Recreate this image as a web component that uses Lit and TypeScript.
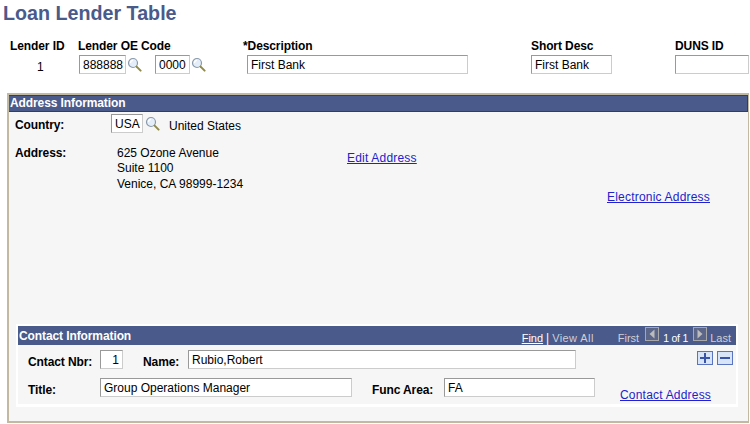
import { LitElement, html, css, svg } from "lit";
import { customElement } from "lit/decorators.js";

const lens = html`<svg class="lens" width="15" height="15" viewBox="0 0 15 15">
  <circle cx="6" cy="6" r="4.5" fill="#e4eefa" stroke="#8a9aac" stroke-width="1.2"/>
  <path d="M3.5 6a2.6 2.6 0 0 1 2.5-2.6" fill="none" stroke="#fff" stroke-width="1.2"/>
  <path d="M9.6 9.6l4 4" stroke="#8f8a4a" stroke-width="2" stroke-linecap="round"/>
</svg>`;

const arrow = (d: string, cls: string) => html`<svg class="nav ${cls}" width="14" height="14" viewBox="0 0 14 14">
  <rect x=".5" y=".5" width="13" height="13" fill="#5c6688" stroke="#a8a8a8"/>
  ${svg`<path d=${d} fill="#bcbcbc"/>`}
</svg>`;

@customElement("app-root")
export class AppRoot extends LitElement {
  static styles = css`
    :host {
      display: block;
      width: 750px;
      height: 424px;
      background: #fff;
      font: 12px "Liberation Sans", Arial, sans-serif;
      color: #000;
      overflow: hidden;
      box-sizing: border-box;
    }
    * { box-sizing: border-box; }
    h1 {
      margin: 0;
      padding: 2px 0 0 3px;
      height: 39px;
      font-size: 19.7px;
      line-height: 22px;
      font-weight: bold;
      color: #4a5a8a;
    }
    label, .lbl { font-weight: bold; white-space: nowrap; letter-spacing: -0.1px; }
    input {
      display: block;
      height: 19px;
      margin: 0;
      padding: 0 0 0 3px;
      font: 12px "Liberation Sans", Arial, sans-serif;
      color: #000;
      background: #fff;
      border: 1px solid;
      border-color: #999 #ccc #ccc #999;
      border-radius: 0;
      outline: none;
    }
    .top {
      display: grid;
      grid-template-columns: 68px 165px 288px 144px 74px;
      padding-left: 10px;
      height: 54px;
    }
    .col { display: flex; flex-direction: column; gap: 2px; }
    .col .lbl { line-height: 14px; height: 14px; }
    .id { padding-left: 27px; padding-top: 5px; line-height: 14px; }
    .codes { display: flex; align-items: center; padding-left: 1px; }
    .codes .lens { margin: 0 0 0 1px; }
    .w47 { width: 47px; }
    .w35 { width: 35px; margin-left: 13px; }
    .pad-desc { padding-left: 4px; }
    .w221 { width: 221px; }
    .w81 { width: 81px; }
    .w74 { width: 74px; }
    .panel {
      margin-left: 7px;
      width: 742px;
      height: 330px;
      border: 2px solid #c2baa0;
      border-right-width: 1px;
      background: #f6f6f6;
      display: flex;
      flex-direction: column;
    }
    .bar {
      background: #4a5a8a;
      color: #fff;
      font-weight: bold;
      line-height: 16px;
      letter-spacing: -0.1px;
    }
    .panel > .bar {
      height: 17px;
      padding-left: 1px;
      border: 1px solid #2c3c74;
      border-left: 0;
      line-height: 15px;
    }
    .country {
      display: grid;
      grid-template-columns: 96px auto auto 1fr;
      align-items: center;
      padding: 2px 0 0 6px;
      height: 21px;
    }
    .country label { padding-top: 3px; }
    .country input { width: 32px; }
    .country .lens { margin-left: 2px; }
    .country .name { margin-left: 9px; padding-top: 4px; }
    .address {
      display: grid;
      grid-template-columns: 102px 230px auto;
      padding: 13px 0 0 6px;
      height: 52px;
    }
    .lines { line-height: 15.4px; }
    .lines div { white-space: nowrap; }
    a { color: #2222cc; text-decoration: underline; white-space: nowrap; letter-spacing: 0.2px; }
    .edit { padding-top: 5px; line-height: 14px; }
    .elec {
      display: flex;
      justify-content: flex-end;
      padding-right: 38px;
      height: 139px;
      padding-top: 5px;
      line-height: 14px;
    }
    .contact {
      margin-left: 7px;
      width: 722px;
      height: 83px;
      border: 2px solid #fff;
      border-bottom-width: 3px;
      background: #f6f6f6;
      display: flex;
      flex-direction: column;
    }
    .contact .bar {
      height: 19px;
      display: flex;
      align-items: center;
      padding-left: 1px;
    }
    .pager {
      margin-left: auto;
      display: flex;
      align-items: center;
      font-weight: normal;
      font-size: 11px;
      letter-spacing: 0;
      color: #cfcfd8;
      padding: 4px 5px 0 0;
    }
    .pager a { color: #fff; letter-spacing: 0; }
    .pager .sep { color: #fff; margin: 0 3px; font-size: 12px; }
    .pager .all { letter-spacing: 0.4px; }
    .pager .first { margin-left: 24px; }
    .pager .nav { margin-top: -8px; }
    .pager .prev { margin-left: 6px; margin-right: 4px; }
    .pager .next { margin-left: 5px; margin-right: 3px; }
    .pager .of { color: #fff; font-size: 10.5px; letter-spacing: -0.2px; }
    .rows {
      flex: 1;
      display: grid;
      grid-template-columns: 72px 43px 45px 184px 72px 151px 1fr;
      grid-template-rows: 28px 28px;
      padding: 5px 0 0 10px;
      align-items: start;
    }
    .rows label { padding-top: 5px; line-height: 14px; }
    .nbr { width: 23px; text-align: right; padding: 0 3px 0 0; }
    .name-input { grid-column: 4 / span 3; width: 388px; }
    .title { grid-column: 2 / span 3; width: 252px; }
    .w151 { width: 151px; }
    .btns { display: flex; gap: 4px; justify-content: flex-end; padding: 1px 3px 0 0; }
    .btn {
      width: 16px;
      height: 14px;
      background: #d8e4f8;
      border: 1px solid #5a74c0;
      display: flex;
      align-items: center;
      justify-content: center;
    }
    .link2 { padding: 10px 0 0 25px; line-height: 14px; }
  `;

  render() {
    return html`
      <h1>Loan Lender Table</h1>
      <div class="top">
        <div class="col"><span class="lbl">Lender ID</span><span class="id">1</span></div>
        <div class="col">
          <span class="lbl">Lender OE Code</span>
          <div class="codes">
            <input class="w47" .value=${"888888"} />${lens}
            <input class="w35" .value=${"0000"} />${lens}
          </div>
        </div>
        <div class="col">
          <span class="lbl">*Description</span>
          <div class="pad-desc"><input class="w221" .value=${"First Bank"} /></div>
        </div>
        <div class="col"><span class="lbl">Short Desc</span><input class="w81" .value=${"First Bank"} /></div>
        <div class="col"><span class="lbl">DUNS ID</span><input class="w74" /></div>
      </div>
      <section class="panel">
        <div class="bar">Address Information</div>
        <div class="country">
          <label>Country:</label>
          <input .value=${"USA"} />
          ${lens}
          <span class="name">United States</span>
        </div>
        <div class="address">
          <label>Address:</label>
          <div class="lines">
            <div>625 Ozone Avenue</div>
            <div>Suite 1100</div>
            <div>Venice, CA 98999-1234</div>
          </div>
          <div class="edit"><a href="#">Edit Address</a></div>
        </div>
        <div class="elec"><a href="#">Electronic Address</a></div>
        <div class="contact">
          <div class="bar">
            <span>Contact Information</span>
            <div class="pager">
              <a href="#">Find</a><span class="sep">|</span><span class="all">View All</span>
              <span class="first">First</span>
              ${arrow("M9.5 2.5v9L4.5 7z", "prev")}
              <span class="of">1 of 1</span>
              ${arrow("M4.5 2.5v9L9.5 7z", "next")}
              <span>Last</span>
            </div>
          </div>
          <div class="rows">
            <label>Cntact Nbr:</label>
            <input class="nbr" .value=${"1"} />
            <label>Name:</label>
            <input class="name-input" .value=${"Rubio,Robert"} />
            <div class="btns">
              <span class="btn"><svg width="10" height="10" viewBox="0 0 10 10"><path d="M4 0h2v4h4v2H6v4H4V6H0V4h4z" fill="#3a54a8"/></svg></span>
              <span class="btn"><svg width="10" height="10" viewBox="0 0 10 10"><path d="M0 4h10v2H0z" fill="#3a54a8"/></svg></span>
            </div>
            <label>Title:</label>
            <input class="title" .value=${"Group Operations Manager"} />
            <label>Func Area:</label>
            <input class="w151" .value=${"FA"} />
            <div class="link2"><a href="#">Contact Address</a></div>
          </div>
        </div>
      </section>
    `;
  }
}
